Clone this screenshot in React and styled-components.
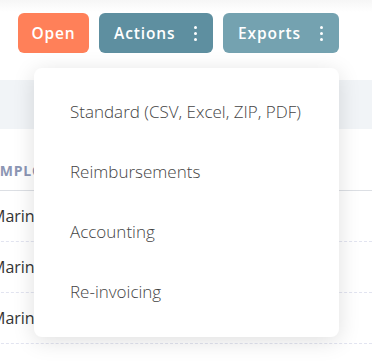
import React from 'react'
import styled, { createGlobalStyle } from 'styled-components'

const GlobalStyle = createGlobalStyle`
  html, body {
    margin: 0;
    padding: 0;
    background: #ffffff;
  }
  body {
    font-family: 'Open Sans', 'Liberation Sans', sans-serif;
  }
`

const Page = styled.div`
  position: relative;
  width: 372px;
  height: 361px;
  overflow: hidden;
  background: linear-gradient(#f6f6f6 0px, #ffffff 12px);
`

const Toolbar = styled.div`
  display: flex;
  gap: 10px;
  padding: 13px 0 0 18px;
  height: 40px;
`

const ActionButton = styled.button`
  display: flex;
  align-items: center;
  justify-content: ${p => (p.menu ? 'space-between' : 'center')};
  width: ${p => p.width}px;
  height: 40px;
  padding: ${p => (p.menu ? '0 16px 0 15px' : '0')};
  border: none;
  border-radius: 6px;
  background: ${p => p.color};
  color: #ffffff;
  font-family: 'Open Sans', sans-serif;
  font-size: 15.5px;
  font-weight: 600;
  letter-spacing: 0.9px;
`

const Kebab = styled.span`
  display: flex;
  flex-direction: column;
  gap: 3px;

  i {
    width: 3px;
    height: 3px;
    border-radius: 50%;
    background: #ffffff;
  }
`

const Table = styled.div`
  margin: 27px 0 0 -9px;
`

const HeadBand = styled.div`
  height: 49px;
  background: #f1f4f7;
`

const HeadRow = styled.div`
  height: 62px;
  box-sizing: border-box;
  padding-top: 32px;
  border-bottom: 1px solid #dcdfe4;
  font-size: 14px;
  font-weight: 700;
  letter-spacing: 0.8px;
  color: #8c96b4;
`

const Row = styled.div`
  display: flex;
  align-items: center;
  height: 50px;
  border-bottom: 1px dashed #e2e4f0;
  font-size: 16px;
  color: #333333;
`

const Menu = styled.div`
  position: absolute;
  left: 34px;
  top: 68px;
  width: 305px;
  padding: 13px 0 16px;
  background: #ffffff;
  border-radius: 8px;
  box-shadow: 0 4px 22px rgba(0, 0, 0, 0.13);
`

const MenuItem = styled.div`
  display: flex;
  align-items: center;
  height: 60px;
  padding-left: 36px;
  font-size: 17px;
  font-weight: 300;
  color: #444444;
`

const Dots = () => (
  <Kebab>
    <i />
    <i />
    <i />
  </Kebab>
)

export default function App() {
  return (
    <Page>
      <GlobalStyle />
      <Toolbar>
        <ActionButton width={71} color="#ff8059">Open</ActionButton>
        <ActionButton width={114} color="#5e8fa0" menu>
          Actions <Dots />
        </ActionButton>
        <ActionButton width={116} color="#74a2b0" menu>
          Exports <Dots />
        </ActionButton>
      </Toolbar>
      <Table>
        <HeadBand />
        <HeadRow>EMPLOYEE</HeadRow>
        <Row>Marine</Row>
        <Row>Marine</Row>
        <Row>Marine</Row>
      </Table>
      <Menu>
        <MenuItem>Standard (CSV, Excel, ZIP, PDF)</MenuItem>
        <MenuItem>Reimbursements</MenuItem>
        <MenuItem>Accounting</MenuItem>
        <MenuItem>Re-invoicing</MenuItem>
      </Menu>
    </Page>
  )
}
